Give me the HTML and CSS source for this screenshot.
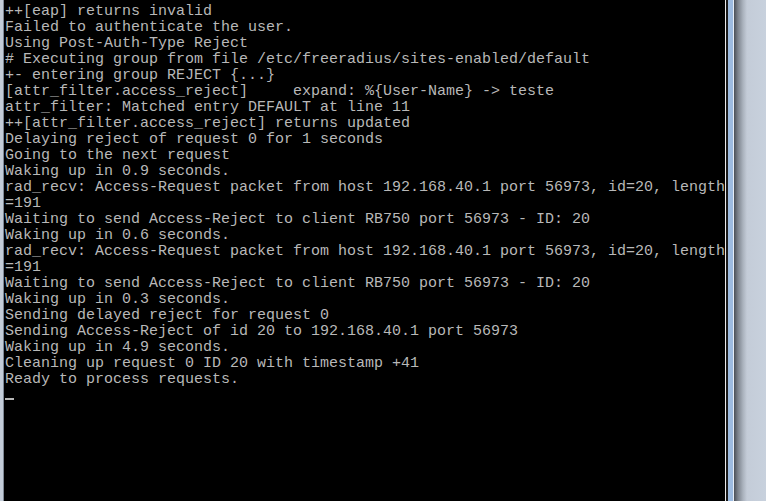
FILE: index.html
```html
<!DOCTYPE html>
<html>
<head>
<meta charset="utf-8">
<link rel="stylesheet" href="styles.css">
</head>
<body>
<div class="window">
  <div class="edge-left"></div>
  <div class="console">
<pre class="text">++[eap] returns invalid
Failed to authenticate the user.
Using Post-Auth-Type Reject
# Executing group from file /etc/freeradius/sites-enabled/default
+- entering group REJECT {...}
[attr_filter.access_reject]     expand: %{User-Name} -&gt; teste
attr_filter: Matched entry DEFAULT at line 11
++[attr_filter.access_reject] returns updated
Delaying reject of request 0 for 1 seconds
Going to the next request
Waking up in 0.9 seconds.
rad_recv: Access-Request packet from host 192.168.40.1 port 56973, id=20, length
=191
Waiting to send Access-Reject to client RB750 port 56973 - ID: 20
Waking up in 0.6 seconds.
rad_recv: Access-Request packet from host 192.168.40.1 port 56973, id=20, length
=191
Waiting to send Access-Reject to client RB750 port 56973 - ID: 20
Waking up in 0.3 seconds.
Sending delayed reject for request 0
Sending Access-Reject of id 20 to 192.168.40.1 port 56973
Waking up in 4.9 seconds.
Cleaning up request 0 ID 20 with timestamp +41
Ready to process requests.</pre>
    <div class="cursor-line"><span class="cursor"></span></div>
  </div>
  <div class="frame-right">
    <div class="line-white"></div>
    <div class="line-dark"></div>
    <div class="line-blue"></div>
    <div class="line-sep"></div>
    <div class="panel"></div>
  </div>
</div>
</body>
</html>
```
FILE: styles.css
```css
html, body {
  margin: 0;
  padding: 0;
  width: 766px;
  height: 501px;
  overflow: hidden;
  background: #000;
}
.window {
  display: flex;
  width: 766px;
  height: 501px;
}
.edge-left {
  width: 3px;
  flex: 0 0 3px;
  background: #c3ccd8;
  border-right: 1px solid #7e8794;
}
.console {
  flex: 0 0 721px;
  background: #000;
  padding: 4px 0 0 1px;
  box-sizing: border-box;
  overflow: hidden;
}
.text {
  margin: 0;
  font-family: "Liberation Mono", monospace;
  font-size: 15px;
  line-height: 16px;
  color: #b8b8b8;
  white-space: pre;
}
.cursor-line {
  height: 16px;
  position: relative;
}
.cursor {
  position: absolute;
  left: 0;
  top: 10px;
  width: 9px;
  height: 2px;
  background: #b8b8b8;
}
.frame-right {
  flex: 1;
  display: flex;
}
.line-white {
  width: 1px;
  background: #e8e8e8;
}
.line-dark {
  width: 2px;
  background: #1a1a1a;
}
.line-blue {
  width: 5px;
  background: #9dbbe0;
}
.line-sep {
  width: 1px;
  background: #e4ecf6;
}
.panel {
  flex: 1;
  background: linear-gradient(to right, #4a4f57 0px, #7d848e 4px, #aab2bd 9px, #c4ccd8 13px, #c8d1dd 100%);
}
```
